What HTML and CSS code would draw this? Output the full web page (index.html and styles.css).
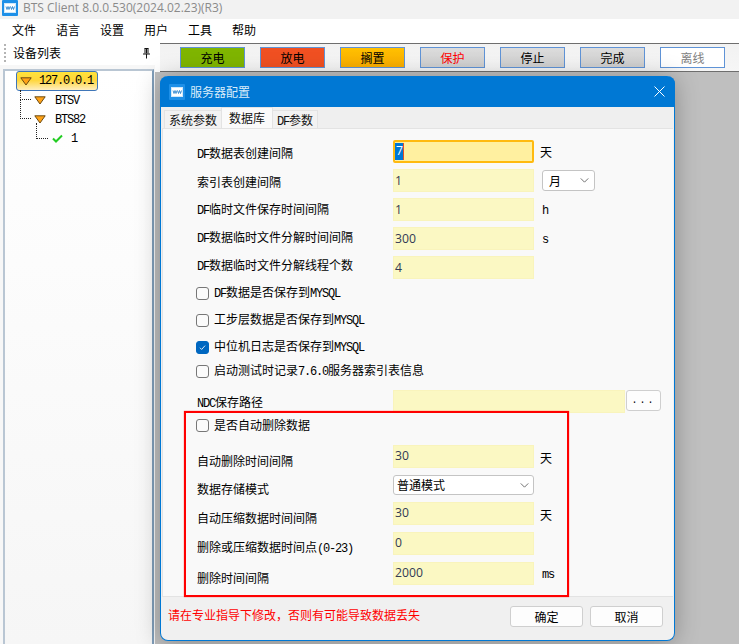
FILE: index.html
```html
<!DOCTYPE html>
<html lang="zh">
<head>
<meta charset="utf-8">
<title>BTS Client</title>
<link rel="stylesheet" href="styles.css">
</head>
<body>
<header class="titlebar">
  <svg class="app-icon" viewBox="0 0 16 16"><rect width="16" height="16" rx="1" fill="#1e90e8"/><rect x="2.500" y="3.500" width="11" height="9" fill="#fff" stroke="#cfe8fb"/><path d="M4 6.500l1 3 1-3 1 3 1-3M8.500 6.500l1 3 1-3 1 3 1-3" fill="none" stroke="#1577c9" stroke-width=".8"/></svg>
  <span class="title-text">BTS Client 8.0.0.530(2024.02.23)(R3)</span>
</header>
<nav class="menubar">
  <span>文件</span><span>语言</span><span>设置</span><span>用户</span><span>工具</span><span>帮助</span>
</nav>
<div class="workspace">
  <aside class="sidebar">
    <div class="side-head">
      <span class="grip"></span>
      <span class="side-title">设备列表</span>
      <svg class="pin" viewBox="0 0 9 11"><path d="M2.500 .5h4M3 .5v5M6 .5v5M4.500 .5v5M1 6h7M4.500 6v4.500" fill="none" stroke="#111" stroke-width="1"/></svg>
    </div>
    <div class="tree">
      <span class="conn conn-a"></span>
      <span class="conn conn-b"></span>
      <span class="conn conn-c"></span>
      <div class="node node-root">
        <svg class="tri" viewBox="0 0 12 9"><path d="M.8 .8h10.400L6 8z" fill="#ffa216" stroke="#6b4a12"/></svg>
        <span class="mono root-label">127.0.0.1</span>
      </div>
      <div class="node node-child">
        <svg class="tri" viewBox="0 0 12 9"><path d="M.8 .8h10.400L6 8z" fill="#ffa216" stroke="#6b4a12"/></svg>
        <span class="mono">BTSV</span>
      </div>
      <div class="node node-child">
        <svg class="tri" viewBox="0 0 12 9"><path d="M.8 .8h10.400L6 8z" fill="#ffa216" stroke="#6b4a12"/></svg>
        <span class="mono">BTS82</span>
      </div>
      <div class="node node-leaf">
        <svg class="check" viewBox="0 0 11 9"><path d="M1 4.500l3 3L10 1.500" fill="none" stroke="#22cc22" stroke-width="2"/></svg>
        <span class="mono">1</span>
      </div>
    </div>
  </aside>
  <main class="main">
    <div class="main-top">
      <div class="toolbar">
        <button class="tool tool-green">充电</button>
        <button class="tool tool-red">放电</button>
        <button class="tool tool-amber">搁置</button>
        <button class="tool tool-protect">保护</button>
        <button class="tool">停止</button>
        <button class="tool">完成</button>
        <button class="tool tool-off">离线</button>
      </div>
    </div>
  </main>
</div>

<section class="dialog">
  <div class="dlg-title">
    <svg class="dlg-icon" viewBox="0 0 16 16"><rect width="16" height="16" rx="1" fill="#1e90e8"/><rect x="2.500" y="3.500" width="11" height="9" fill="#fff" stroke="#cfe8fb"/><path d="M4 6.500l1 3 1-3 1 3 1-3M8.500 6.500l1 3 1-3 1 3 1-3" fill="none" stroke="#1577c9" stroke-width=".8"/></svg>
    <span class="dlg-name">服务器配置</span>
    <svg class="dlg-close" viewBox="0 0 11 11"><path d="M.5 .5l10 10M10.500 .5l-10 10" stroke="#fff" fill="none"/></svg>
  </div>
  <div class="tabs">
    <span class="tab">系统参数</span>
    <span class="tab tab-on">数据库</span>
    <span class="tab"><span class="lat">DF</span>参数</span>
  </div>
  <div class="panel">
    <div class="row row-first"><label class="lbl lbl-p4"><span class="lat">DF</span>数据表创建间隔</label><span class="input input-focus"><span class="sel">7</span></span><span class="unit">天</span></div>
    <div class="row"><label class="lbl lbl-p2">索引表创建间隔</label><span class="input">1</span>
      <span class="combo combo-small">月<svg class="chev" viewBox="0 0 10 6"><path d="M.5 .5L5 5 9.500 .5" fill="none" stroke="#555"/></svg></span></div>
    <div class="row"><label class="lbl"><span class="lat">DF</span>临时文件保存时间间隔</label><span class="input">1</span><span class="unit unit-lat">h</span></div>
    <div class="row"><label class="lbl lbl-n2"><span class="lat">DF</span>数据临时文件分解时间间隔</label><span class="input">300</span><span class="unit unit-lat">s</span></div>
    <div class="row"><label class="lbl lbl-n4"><span class="lat">DF</span>数据临时文件分解线程个数</label><span class="input">4</span></div>

    <div class="chk chk-1"><span class="box"></span><span class="lbl-c"><span class="lat">DF</span>数据是否保存到<span class="lat">MYSQL</span></span></div>
    <div class="chk chk-2"><span class="box"></span><span class="lbl-c">工步层数据是否保存到<span class="lat">MYSQL</span></span></div>
    <div class="chk chk-2"><span class="box box-on"><svg viewBox="0 0 13 13"><path d="M3.500 6.800l2 2 4-4.500" fill="none" stroke="#fff" stroke-width="1"/></svg></span><span class="lbl-c">中位机日志是否保存到<span class="lat">MYSQL</span></span></div>
    <div class="chk chk-3"><span class="box"></span><span class="lbl-c">启动测试时记录<span class="lat">7.6.0</span>服务器索引表信息</span></div>

    <div class="row row-ndc"><label class="lbl lbl-ndc"><span class="lat">NDC</span>保存路径</label><span class="input input-wide"></span><button class="btn-dots">...</button></div>

    <div class="chk chk-4"><span class="box"></span><span class="lbl-c">是否自动删除数据</span></div>

    <div class="row row-a"><label class="lbl lbl-low">自动删除时间间隔</label><span class="input input-top">30</span><span class="unit unit-low">天</span></div>
    <div class="row row-b"><label class="lbl lbl-low">数据存储模式</label><span class="combo combo-wide">普通模式<svg class="chev" viewBox="0 0 10 6"><path d="M.5 .5L5 5 9.500 .5" fill="none" stroke="#555"/></svg></span></div>
    <div class="row row-c"><label class="lbl lbl-low">自动压缩数据时间间隔</label><span class="input input-top">30</span><span class="unit unit-low">天</span></div>
    <div class="row row-c"><label class="lbl lbl-low">删除或压缩数据时间点<span class="lat">(0-23)</span></label><span class="input input-top">0</span></div>
    <div class="row row-c"><label class="lbl lbl-low">删除时间间隔</label><span class="input input-top">2000</span><span class="unit unit-lat">ms</span></div>
    <div class="redbox"></div>
  </div>
  <div class="dlg-foot">
    <span class="warn">请在专业指导下修改，否则有可能导致数据丢失</span>
    <button class="btn">确定</button>
    <button class="btn">取消</button>
  </div>
</section>
</body>
</html>
```
FILE: styles.css
```css
* { box-sizing: border-box; }
html, body { margin: 0; padding: 0; }
body {
  width: 739px; height: 644px; overflow: hidden; position: relative;
  background: #fff; color: #000;
  font: 12px/16px "Noto Sans CJK SC", sans-serif;
}
button { font: inherit; padding: 0; color: inherit; }

.titlebar { height: 19px; background: #f2f2f2; display: flex; align-items: center; padding-left: 2px; }
.app-icon { width: 16px; height: 16px; margin-top: -3px; }
.title-text { margin-left: 5px; color: #8a8a8a; font: 12px/16px "Open Sans", sans-serif; margin-top: -3px; }

.menubar { height: 24px; display: flex; gap: 20px; padding: 3px 0 0 12px; background: #fff; }

.workspace { display: flex; height: 601px; background: #fff; }
.sidebar { width: 155px; display: flex; flex-direction: column; background: #f7f7f7; }
.side-head { height: 22px; display: flex; align-items: center; padding: 0 4px 2px 4px; background: #fff; }
.grip { width: 2px; height: 18px; border-left: 2px dotted #b4b4b4; }
.side-title { margin-left: 7px; flex: 1; }
.pin { width: 9px; height: 11px; }
.tree {
  position: relative; flex: 1; margin: 4px 1px 0 3px;
  background: linear-gradient(#fff, #f6f6f6);
  border: 2px solid #b9c6d3; border-right-color: #7f9db9; border-bottom: 0; padding: 0 0 0 11px;
}
.mono { font: 12px/16px "Liberation Mono", monospace; letter-spacing: -1.200px; }
.tri { width: 12px; height: 9px; flex: none; }
.node { display: flex; align-items: center; height: 19px; }
.node-root {
  width: 82px; height: 20px; padding-left: 3px; border: 1px solid #3f76b8; border-radius: 3px;
  background: linear-gradient(#ffe23a 0%, #ffd63a 45%, #ffeec0 100%);
}
.root-label { margin-left: 7px; }
.node-child { padding-left: 18px; }
.node-child .mono { margin-left: 9px; }
.node-leaf { padding-left: 36px; }
.node-leaf .mono { margin-left: 8px; }
.check { width: 11px; height: 9px; }
.conn { position: absolute; border-left: 1px dotted #222; border-bottom: 1px dotted #222; }
.conn-a { left: 15px; top: 19px; width: 11px; height: 10px; }
.conn-b { left: 15px; top: 28px; width: 11px; height: 20px; }
.conn-c { left: 31px; top: 52px; width: 12px; height: 16px; }

.main { flex: 1; background: #bfbfbf; }
.main-top { background: #fff; padding-left: 5px; }
.toolbar {
  height: 29px; display: flex; gap: 15px; align-items: center; padding: 0 0 0 20px;
  border-top: 1px solid #6e6e6e; border-bottom: 1px solid #6e6e6e;
  background: linear-gradient(#f2f2f2, #f6f6f6);
}
.tool {
  width: 65px; height: 21px; border: 1px solid #5f93d6; line-height: 18px;
  background: linear-gradient(#dcdcdc, #cfcfcf);
}
.tool-green { background: #7fb500; }
.tool-red { background: #f05022; }
.tool-amber { background: linear-gradient(#ffc000, #f9ad00); }
.tool-protect { color: #f00; }
.tool-off { background: #fff; color: #808080; }

.dialog {
  position: absolute; left: 160px; top: 76px; width: 515px; height: 565px;
  background: #f0f0f0; border: 1px solid #0078d4; border-top: 0; border-radius: 8px;
  box-shadow: 0 2px 24px rgba(0,0,0,.28);
  display: flex; flex-direction: column;
}
.dlg-title {
  height: 31px; margin: 0 -1px; background: #0078d4; border-radius: 8px 8px 0 0;
  display: flex; align-items: center; padding: 0 10px 0 9px; color: #d9ecfa;
}
.dlg-icon { width: 16px; height: 16px; }
.dlg-name { margin-left: 5px; flex: 1; font-size: 12px; }
.dlg-close { width: 11px; height: 11px; }
.tabs { height: 21px; display: flex; align-items: flex-end; padding-left: 3px; background: #efefef; }
.tab {
  height: 18px; padding: 0 4px; background: #f2f2f2; border: 1px solid #e3e3e3; border-bottom: 0; line-height: 18px; margin-right: -1px; color: #111;
}
.tab-on { height: 21px; background: #fafafa; padding: 0 7px; line-height: 20px; position: relative; z-index: 1; }
.lat { font: 12px/16px "Liberation Mono", monospace; letter-spacing: -1.200px; }
.panel {
  position: relative; height: 469px; margin: 0 1px; background: #f9f9f9;
  border-top: 1px solid #e3e3e3; border-bottom: 1px solid #e3e3e3; border-left: 1px solid #e3e3e3;
}
.row { display: flex; height: 23px; margin-top: 6px; padding-left: 34px; align-items: center; }
.row-first { margin-top: 11px; }
.lbl { width: 196px; }
.lbl-p4 { padding-top: 4px; }
.lbl-p2 { padding-top: 2px; }
.lbl-n2 { padding-bottom: 2px; }
.lbl-n4 { padding-bottom: 4px; }
.lbl-low { padding-top: 8px; }
.lbl-ndc { padding-top: 4px; }
.input {
  width: 141px; height: 23px; background: #fbf8c3; border: 1px solid #f9f4bc; padding: 0 0 0 1px;
  font: 12.200px/21px "Open Sans", sans-serif; color: #333a55; flex: none;
}
.input-top { line-height: 20px; }
.input-focus {
  background: #fff0a0; border: 2px solid #ffba10; border-radius: 2px; padding: 1px 0 0;
  display: flex; align-items: flex-start;
}
.sel {
  display: block; background: #0078d4; color: #fff; width: 9px; height: 17px; line-height: 16px; padding-left: 1px;
  border-right: 1px solid #e85020;
}
.input-wide { width: 232px; }
.unit { margin-left: 6px; }
.unit-low { padding-top: 3px; }
.unit-lat { margin-left: 8px; margin-top: 2px; font: 12px/16px "Liberation Mono", monospace; letter-spacing: -1.200px; }
.combo {
  display: flex; align-items: center; justify-content: space-between; height: 20px; background: #fff;
  border: 1px solid #c4c4c4; border-radius: 3px;
}
.combo-small { width: 53px; margin-left: 8px; height: 21px; padding: 0 5px 0 6px; }
.combo-wide { width: 141px; padding: 0 4px 0 3px; }
.chev { width: 9px; height: 5px; }
.chk { display: flex; align-items: center; height: 16px; padding-left: 33px; }
.chk-1 { margin-top: 6px; }
.chk-2 { margin-top: 11px; }
.chk-3 { margin-top: 8px; }
.chk-4 { margin-top: 4px; }
.box {
  width: 13px; height: 13px; border: 1px solid #777; border-radius: 3px; background: #fbfbfb; margin-right: 5px; flex: none; display: flex;
}
.box svg { width: 11px; height: 11px; }
.box-on { background: #0067c0; border-color: #0067c0; }
.row-ndc { margin-top: 11px; align-items: flex-start; }
.btn-dots {
  width: 35px; height: 21px; margin-left: 1px; background: #fdfdfd; border: 1px solid #cfcfcf; border-radius: 3px; font: 10px/14px "Liberation Mono", monospace; letter-spacing: 2px;
}
.row-a { margin-top: 12px; }
.row-b { margin-top: 7px; height: 20px; }
.row-c { margin-top: 7px; }
.redbox {
  position: absolute; left: 21px; top: 282px; width: 385px; height: 186px;
  border: 2px solid #f00; box-shadow: 0 0 1px #f44;
}
.dlg-foot { flex: 1; display: flex; align-items: flex-start; padding: 9px 11px 0 7px; gap: 7px; }
.warn { color: #f00; flex: 1; padding-top: 1px; }
.btn { width: 73px; height: 21px; background: #fdfdfd; border: 1px solid #cfcfcf; border-radius: 3px; line-height: 18px; }
```
